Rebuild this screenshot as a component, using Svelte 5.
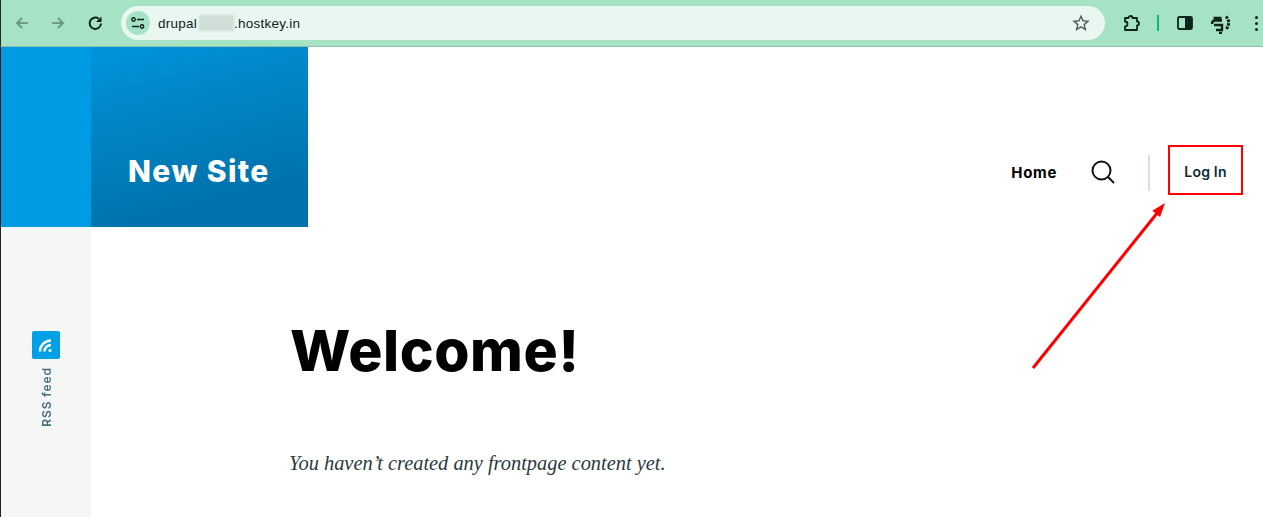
<script>
	let title = "New Site";
	let navItems = ["Home"];
</script>

<div class="page">
	<header class="browser">
		<div class="nav-btns">
			<svg class="muted" width="16" height="16" viewBox="0 0 16 16"><path d="M14 8H3M8 3L3 8l5 5" /></svg>
			<svg class="muted" width="16" height="16" viewBox="0 0 16 16"><path d="M2 8h11M8 3l5 5-5 5" /></svg>
			<svg class="reload" width="16" height="16" viewBox="0 0 16 16"><path d="M14 8.500A5.700 5.700 0 1 1 11.800 3.700" /><path class="solid" d="M14.500 1.500v5.500H9z" /></svg>
		</div>
		<div class="omnibox">
			<span class="site-info">
				<svg width="16" height="16" viewBox="0 0 16 16"><path class="thin" d="M7 4.500h7M2 11.500h7" /><circle class="thin" cx="3.500" cy="4.500" r="1.700" /><circle class="thin" cx="12" cy="11.500" r="1.700" /></svg>
			</span>
			<span class="url">drupal<span class="blur"></span>.hostkey.in</span>
			<svg class="star" width="18" height="18" viewBox="0 0 18 18"><path class="thin" d="M9 2.200l2 4.600 5 .5-3.800 3.300 1.200 4.900L9 12.900l-4.400 2.600 1.200-4.900L2 7.300l5-.5z" /></svg>
		</div>
		<div class="tools">
			<svg width="20" height="20" viewBox="0 0 20 20"><path class="mid" d="M4 5h3.500a2 2 0 0 1 4 0H16v3.500a2 2 0 0 1 0 4V17H4v-3.500a2 2 0 0 0 0-5z" /></svg>
			<span class="sep"></span>
			<svg class="panel" width="16" height="16" viewBox="0 0 16 16"><rect class="mid" x="1" y="2" width="14" height="12" rx="1.500" /><rect class="solid" x="8" y="2" width="7" height="12" /></svg>
			<svg class="profile" width="22" height="20" viewBox="0 0 22 20">
				<path class="fat" d="M3.500 4h8M2 10c0-2.500 1-3.500 3-3.500h7M4 11h8v5H6M9 19h3" />
				<path class="speck" d="M16 2.500c3 3 4 8 0 13" />
			</svg>
			<span class="dots"><i></i><i></i><i></i></span>
		</div>
	</header>

	<div class="site">
		<aside class="rail">
			<div class="rail-top"></div>
			<div class="rss">
				<span class="rss-icon">
					<svg width="16" height="16" viewBox="0 0 16 16"><path d="M2 14.500A11 11 0 0 1 13 3.500M6.500 14.500A6.500 6.500 0 0 1 13 8" /><circle cx="12" cy="13.500" r="1.600" /></svg>
				</span>
				<span class="rss-label">RSS feed</span>
			</div>
		</aside>

		<div class="main">
			<div class="top">
				<div class="brand"><span>{title}</span></div>
				<nav class="menu">
					{#each navItems as item}
						<span class="nav-link">{item}</span>
					{/each}
					<svg class="search" width="24" height="24" viewBox="0 0 24 24"><circle cx="10.500" cy="10.500" r="9" /><path d="M17 17l6 6" /></svg>
					<span class="divider"></span>
					<span class="login">Log In</span>
				</nav>
			</div>
			<main class="content">
				<h1>Welcome!</h1>
				<p>You haven’t created any frontpage content yet.</p>
			</main>
		</div>
	</div>

	<svg class="arrow" width="150" height="180" viewBox="0 0 150 180">
		<path d="M3 166L128 10" />
		<path class="head" d="M135 1L130.100 15L122.300 8.800z" />
	</svg>
</div>

<style>
	:global(body) {
		margin: 0;
		background: #fff;
	}

	.page {
		position: relative;
		width: 1263px;
		height: 517px;
		overflow: hidden;
		font-family: Inter, "Liberation Sans", sans-serif;
	}

	.browser {
		height: 46px;
		display: flex;
		align-items: center;
		background: #a6e3c5;
		border-left: 1px solid #1c2b24;
		border-bottom: 1px solid #8fbfa8;
		box-sizing: content-box;
	}

	.browser svg path,
	.browser svg circle,
	.browser svg rect {
		fill: none;
		stroke: #10231b;
		stroke-width: 2;
	}

	.browser svg .thin {
		stroke-width: 1.400;
	}

	.browser svg .mid {
		stroke-width: 1.800;
		stroke-linejoin: round;
	}

	.browser svg .fat {
		stroke-width: 2.400;
	}

	.browser svg .speck {
		stroke-width: 3;
		stroke-dasharray: 2.500 1.200;
	}

	.browser svg .solid {
		fill: #10231b;
		stroke: none;
	}

	.browser svg.muted path {
		stroke: #6f9a86;
	}

	.nav-btns {
		display: flex;
		align-items: center;
		gap: 20px;
		width: 120px;
		padding-left: 13px;
		box-sizing: border-box;
	}

	.reload {
		margin-left: 1px;
	}

	.omnibox {
		width: 984px;
		height: 34px;
		border-radius: 17px;
		background: #e8f7f0;
		display: flex;
		align-items: center;
		padding: 0 15px 0 5px;
		box-sizing: border-box;
	}

	.site-info {
		width: 24px;
		height: 24px;
		border-radius: 50%;
		background: #a6e3c5;
		display: flex;
		align-items: center;
		justify-content: center;
	}

	.url {
		margin-left: 8px;
		flex: 1;
		font-family: "Liberation Sans", sans-serif;
		font-size: 13.500px;
		letter-spacing: 0.25px;
		color: #10231b;
	}

	.blur {
		display: inline-block;
		width: 35px;
		height: 16px;
		margin-left: 2px;
		vertical-align: -3px;
		background: #cfdfd7;
		filter: blur(1px);
	}

	.browser svg.star path {
		stroke: #4d5f56;
	}

	.tools {
		display: flex;
		align-items: center;
		margin-left: 16px;
		flex: 1;
	}

	.sep {
		width: 2px;
		height: 16px;
		margin-left: 16px;
		background: #11b76b;
	}

	.panel {
		margin-left: 18px;
	}

	.profile {
		margin-left: 17px;
		margin-top: 2px;
	}

	.dots {
		display: flex;
		flex-direction: column;
		gap: 3px;
		margin-left: 23px;
	}

	.dots i {
		width: 3px;
		height: 3px;
		border-radius: 50%;
		background: #10231b;
	}

	.site {
		display: flex;
		height: 470px;
	}

	.rail {
		width: 91px;
		flex: none;
		background: #f5f7f7;
		border-left: 1px solid #222;
		box-sizing: border-box;
	}

	.rail-top {
		height: 180px;
		background: #009ce3;
	}

	.rss {
		margin-top: 104px;
		display: flex;
		flex-direction: column;
		align-items: center;
		gap: 8px;
	}

	.rss-icon {
		width: 28px;
		height: 28px;
		border-radius: 2px;
		background: #00a0e6;
		display: flex;
		align-items: center;
		justify-content: center;
	}

	.rss-icon path {
		fill: none;
		stroke: #fff;
		stroke-width: 2.500;
	}

	.rss-icon circle {
		fill: #fff;
	}

	.rss-label {
		writing-mode: vertical-rl;
		transform: rotate(180deg);
		font-size: 12px;
		font-weight: 600;
		letter-spacing: 0.9px;
		color: #46707f;
	}

	.main {
		flex: 1;
		min-width: 0;
	}

	.top {
		height: 180px;
		display: flex;
		justify-content: space-between;
	}

	.brand {
		width: 217px;
		height: 180px;
		background: linear-gradient(165deg, #0094dc 0%, #0072ab 80%);
		display: flex;
		align-items: flex-end;
		padding: 0 0 38px 37px;
		box-sizing: border-box;
		color: #fff;
		font-size: 30px;
		font-weight: 800;
		line-height: 36px;
		letter-spacing: 1.400px;
	}

	.menu {
		display: flex;
		align-items: center;
		margin-top: 98px;
		height: 50px;
		margin-right: 20px;
	}

	.nav-link {
		margin-top: 4px;
		margin-left: -1px;
		font-size: 15px;
		font-weight: 700;
		letter-spacing: 0.65px;
		color: #000;
	}

	.search {
		margin-left: 34px;
		margin-top: 4px;
	}

	.search circle,
	.search path {
		fill: none;
		stroke: #111;
		stroke-width: 2;
	}

	.divider {
		width: 2px;
		height: 36px;
		margin: 6px 18px 0 33px;
		background: #d5e0e3;
	}

	.login {
		width: 75px;
		height: 50px;
		padding-top: 3px;
		border: 2px solid #f00;
		display: flex;
		align-items: center;
		justify-content: center;
		font-size: 14px;
		font-weight: 600;
		letter-spacing: 0.2px;
		color: #0e2a35;
		box-sizing: border-box;
	}

	.content {
		padding: 88px 0 0 199px;
	}

	h1 {
		margin: 0;
		font-size: 57px;
		line-height: 72px;
		font-weight: 800;
		letter-spacing: 0.6px;
		color: #000;
	}

	p {
		margin: 62px 0 0 -1px;
		font-family: "Liberation Serif", serif;
		font-style: italic;
		font-size: 20.400px;
		line-height: 28px;
		color: #2a3a40;
	}

	.arrow {
		position: absolute;
		left: 1030px;
		top: 202px;
	}

	.arrow path {
		fill: none;
		stroke: #f00;
		stroke-width: 3;
	}

	.arrow .head {
		fill: #f00;
		stroke: none;
	}
</style>
